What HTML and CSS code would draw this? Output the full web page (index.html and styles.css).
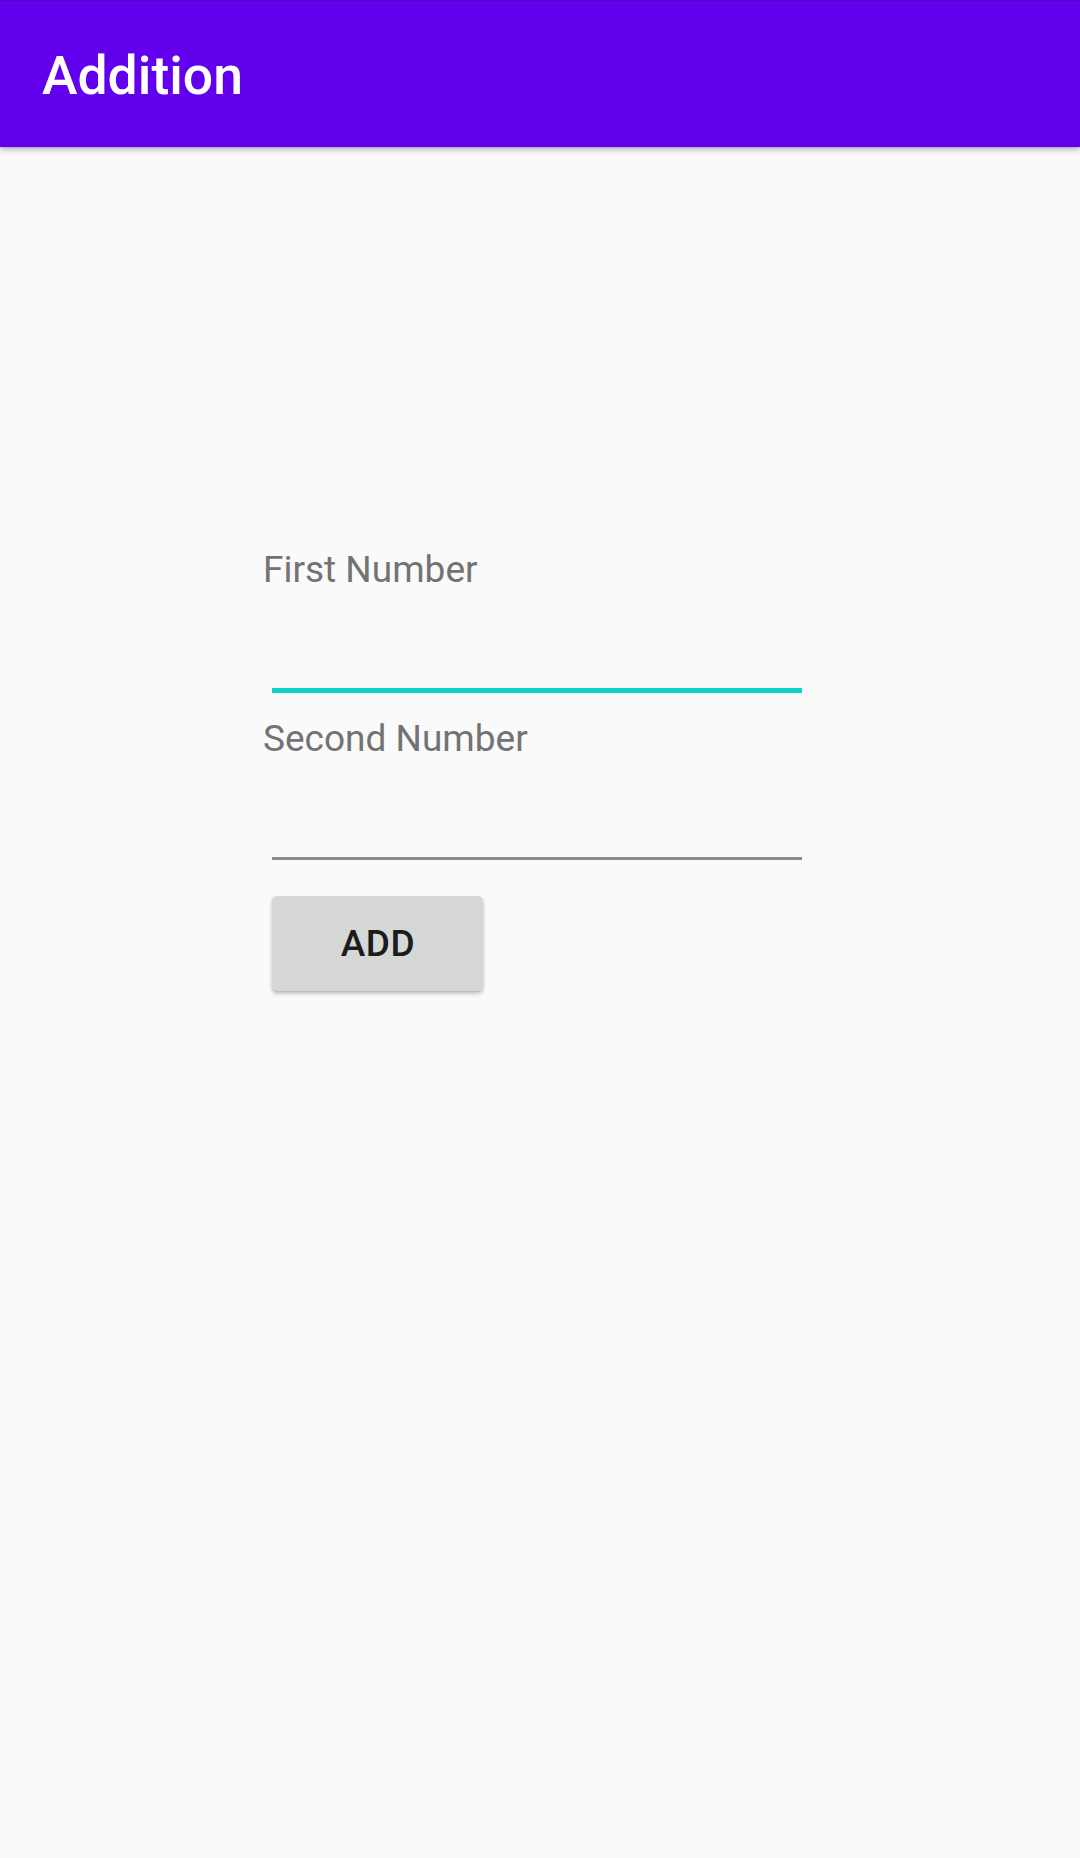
FILE: index.html
```html
<!DOCTYPE html>
<html>
<head>
<meta charset="utf-8">
<link rel="stylesheet" href="styles.css">
</head>
<body>
<header class="appbar"><h1 class="title">Addition</h1></header>
<main class="form">
  <label class="label">First Number</label>
  <div class="field field-focused"></div>
  <label class="label label-second">Second Number</label>
  <div class="field"></div>
  <button class="btn">ADD</button>
</main>
</body>
</html>
```
FILE: styles.css
```css
html, body {
  margin: 0;
  padding: 0;
  background: #fafafa;
  font-family: Roboto, "Liberation Sans", sans-serif;
}
body {
  width: 1080px;
  height: 1858px;
  overflow: hidden;
}
.appbar {
  position: relative;
  z-index: 2;
  height: 147px;
  background: #6200ee;
  border-top: 1px solid #5000c8;
  box-sizing: border-box;
  box-shadow: 0 3px 6px rgba(0,0,0,0.22), 0 1px 3px rgba(0,0,0,0.18);
  display: flex;
  align-items: center;
  padding-left: 42px;
}
.title {
  margin: 0;
  color: #ffffff;
  font-size: 53.5px;
  font-weight: 500;
  line-height: 1;
  padding-top: 3px;
}
.form {
  display: flex;
  flex-direction: column;
  align-items: flex-start;
  padding-top: 404px;
  padding-left: 263px;
}
.label {
  font-size: 37px;
  line-height: 37px;
  color: #737373;
}
.label-second {
  margin-top: 27px;
}
.field {
  margin-left: 9px;
  width: 530px;
  height: 100px;
  border-bottom: 5px solid #0dd3c4;
}
.field:not(.field-focused) {
  height: 100px;
  border-bottom: 3px solid #8a8a8a;
}
.btn {
  margin-top: 36px;
  margin-left: 9px;
  width: 211px;
  height: 95px;
  border: none;
  border-radius: 5px;
  background: #d6d7d7;
  box-shadow: 0 3px 4px rgba(0,0,0,0.2), 0 1px 2px rgba(0,0,0,0.12);
  font-family: Roboto, "Liberation Sans", sans-serif;
  font-size: 37px;
  font-weight: 500;
  color: #1c1c1c;
  letter-spacing: 0.5px;
  padding: 0 0 0 1px;
}
```
